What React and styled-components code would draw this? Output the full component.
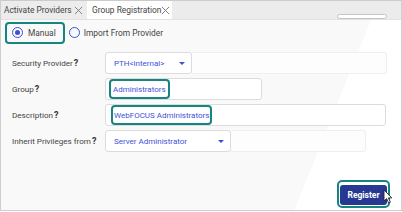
import React from "react";
import styled, { createGlobalStyle } from "styled-components";

const GlobalStyle = createGlobalStyle`
  html, body {
    margin: 0;
    padding: 0;
    background: #ffffff;
  }
  * {
    box-sizing: border-box;
  }
`;

const Frame = styled.div`
  width: 402px;
  height: 211px;
  border-left: 1px solid #cfcfcf;
  border-right: 1px solid #cfcfcf;
  border-bottom: 1px solid #cfcfcf;
  font-family: Roboto, "Liberation Sans", sans-serif;
  display: flex;
  flex-direction: column;
  position: relative;
  overflow: hidden;
  background: linear-gradient(112deg, #f9f9f9 0%, #f9f9f9 78%, #ffffff 78%);
`;

const TabBar = styled.div`
  height: 20px;
  background: #ececec;
  border-top: 1px solid #cbcbcb;
  border-bottom: 1px solid #e2e2e2;
  display: flex;
  align-items: stretch;
  position: relative;
`;

const Tab = styled.div`
  display: flex;
  align-items: center;
  padding: 0 4px 0 ${(p) => (p.$active ? "5px" : "3px")};
  width: ${(p) => p.$width}px;
  background: ${(p) => (p.$active ? "#ffffff" : "transparent")};
  color: #444;
  font-size: 8.4px;
  white-space: nowrap;
  justify-content: space-between;
`;

const CloseIcon = styled.svg`
  width: 9px;
  height: 9px;
  flex: none;
`;

const SearchStub = styled.div`
  position: absolute;
  right: 14px;
  top: 13px;
  width: 50px;
  height: 5px;
  border: 1px solid #c4c4c4;
  border-radius: 3px;
  background: #ffffff;
`;

const RadioRow = styled.div`
  display: flex;
  align-items: center;
  padding: 1px 0 0 4px;
  height: 24px;
`;

const RadioOption = styled.label`
  display: flex;
  align-items: center;
  gap: ${(p) => (p.$highlight ? 5 : 4)}px;
  height: 22px;
  padding: 0 7px 0 ${(p) => (p.$highlight ? 5 : 2)}px;
  border: 2px solid ${(p) => (p.$highlight ? "#168580" : "transparent")};
  border-radius: 4px;
  font-size: 8.4px;
  color: #444;
`;

const RadioDot = styled.span`
  width: 11px;
  height: 11px;
  border-radius: 50%;
  border: 1.3px solid #3d4fd6;
  display: flex;
  align-items: center;
  justify-content: center;
  &::after {
    content: "";
    width: 5px;
    height: 5px;
    border-radius: 50%;
    background: ${(p) => (p.$checked ? "#3d4fd6" : "transparent")};
  }
`;

const Form = styled.div`
  display: flex;
  flex-direction: column;
  gap: 4px;
  padding: 8px 0 0 11px;
`;

const Row = styled.div`
  display: flex;
  align-items: center;
  height: 22px;
`;

const Label = styled.div`
  width: 93px;
  font-size: 8.1px;
  color: #444;
  white-space: nowrap;
  b {
    font-weight: 700;
    font-size: 9px;
    color: #333;
    margin-left: 1px;
  }
`;

const Field = styled.div`
  width: ${(p) => p.$width}px;
  height: 22px;
  background: #ffffff;
  border: 1px solid #dcdcdc;
  border-radius: 3px;
  display: flex;
  align-items: center;
  justify-content: ${(p) => (p.$tight ? "flex-start" : "space-between")};
  padding: 0 6px 0 ${(p) => p.$pl}px;
  font-size: 8px;
  color: #4152d8;
  flex: none;
`;

const Ghost = styled.div`
  width: ${(p) => p.$width}px;
  height: 22px;
  border: 1px solid #efefef;
  border-left: none;
  border-radius: 0 3px 3px 0;
  background: #fdfdfd;
`;

const Highlight = styled.span`
  border: 2px solid #168580;
  border-radius: 4px;
  height: 20px;
  display: flex;
  align-items: center;
  padding: 0 ${(p) => p.$pad}px;
  white-space: nowrap;
`;

const Caret = styled.span`
  width: 0;
  height: 0;
  border-left: 3.5px solid transparent;
  border-right: 3.5px solid transparent;
  border-top: 3.5px solid #3d4fd6;
`;

const Footer = styled.div`
  margin-top: auto;
  display: flex;
  justify-content: flex-end;
  padding: 0 11px 2px 0;
`;

const ButtonRing = styled.div`
  border: 2px solid #168580;
  border-radius: 5px;
  padding: 1px;
  position: relative;
`;

const Button = styled.button`
  width: 47px;
  height: 20px;
  border: none;
  border-radius: 3px;
  background: #263891;
  color: #ffffff;
  font-family: Roboto, "Liberation Sans", sans-serif;
  font-weight: 700;
  font-size: 8.5px;
  padding: 0;
`;

const Cursor = styled.svg`
  position: absolute;
  right: -5px;
  top: 7px;
  width: 10px;
  height: 15px;
`;

function Close() {
  return (
    <CloseIcon viewBox="0 0 10 10">
      <path d="M1 1 L9 9 M9 1 L1 9" stroke="#777" strokeWidth="1" fill="none" />
    </CloseIcon>
  );
}

export default function App() {
  return (
    <>
      <GlobalStyle />
      <Frame>
        <TabBar>
          <Tab $width={86}>
            Activate Providers <Close />
          </Tab>
          <Tab $active $width={85}>
            Group Registration <Close />
          </Tab>
          <SearchStub />
        </TabBar>

        <RadioRow>
          <RadioOption $highlight>
            <RadioDot $checked />
            Manual
          </RadioOption>
          <RadioOption>
            <RadioDot />
            Import From Provider
          </RadioOption>
        </RadioRow>

        <Form>
          <Row>
            <Label>
              Security Provider<b>?</b>
            </Label>
            <Field $width={87} $pl={8}>
              PTH&lt;internal&gt;
              <Caret />
            </Field>
            <Ghost $width={195} />
          </Row>
          <Row>
            <Label>
              Group<b>?</b>
            </Label>
            <Field $width={157} $pl={3} $tight>
              <Highlight $pad={2}>Administrators</Highlight>
            </Field>
          </Row>
          <Row>
            <Label>
              Description<b>?</b>
            </Label>
            <Field $width={281} $pl={5} $tight>
              <Highlight $pad={1}>WebFOCUS Administrators</Highlight>
            </Field>
          </Row>
          <Row>
            <Label>
              Inherit Privileges from<b>?</b>
            </Label>
            <Field $width={126} $pl={8}>
              Server Administrator
              <Caret />
            </Field>
            <Ghost $width={135} />
          </Row>
        </Form>

        <Footer>
          <ButtonRing>
            <Button>Register</Button>
            <Cursor viewBox="0 0 10 15">
              <path
                d="M1 1 L1 12 L3.6 9.6 L5.6 14 L7.4 13.2 L5.4 8.9 L8.8 8.9 Z"
                fill="#ffffff"
                stroke="#222"
                strokeWidth="0.9"
                strokeLinejoin="round"
              />
            </Cursor>
          </ButtonRing>
        </Footer>
      </Frame>
    </>
  );
}
